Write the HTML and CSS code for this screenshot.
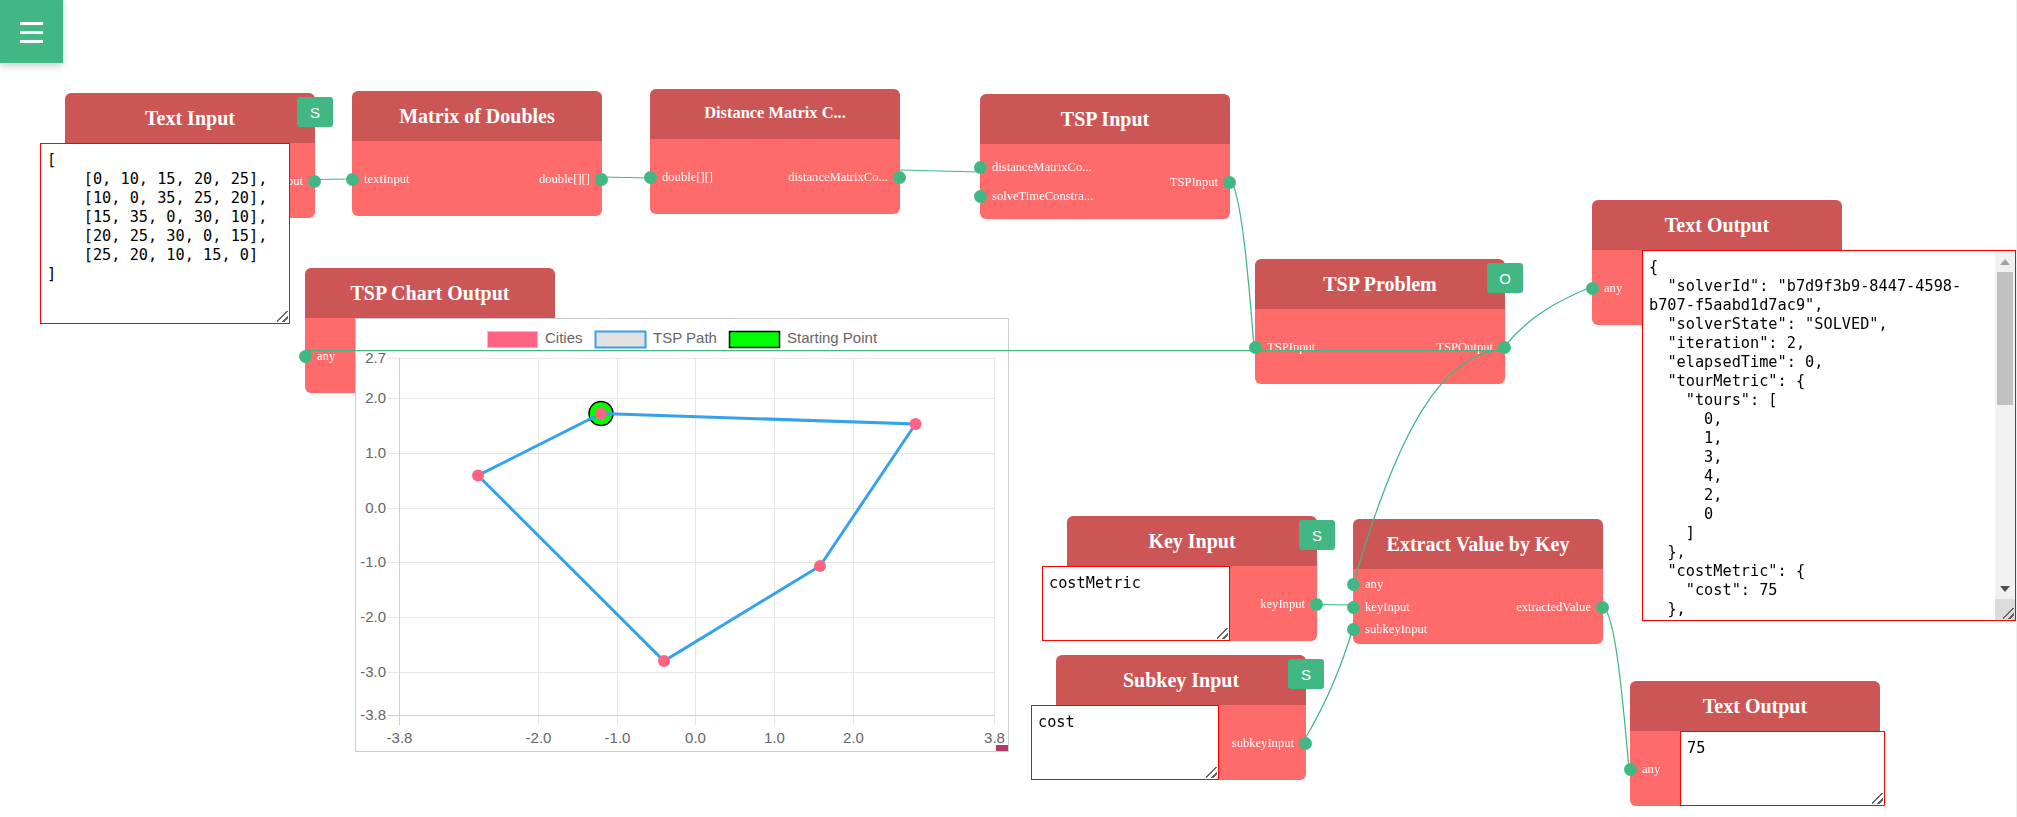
FILE: index.html
```html
<!DOCTYPE html>
<html lang="en">
<head>
  <meta charset="UTF-8">
  <meta name="viewport" content="width=device-width, initial-scale=1.0">
  <title>TSP Flow</title>
  <link rel="stylesheet" href="styles.css">
</head>
<body>
  <div class="sidebar-edge"></div>
  <button class="menu-button" type="button">
    <span></span><span></span><span></span>
  </button>

  <div class="canvas">
    <div class="node node-text-input">
      <div class="node-title">Text Input</div>
      <div class="badge">S</div>
      <div class="node-body">
        <textarea class="node-text input-text tall" spellcheck="false">[
    [0, 10, 15, 20, 25],
    [10, 0, 35, 25, 20],
    [15, 35, 0, 30, 10],
    [20, 25, 30, 0, 15],
    [25, 20, 10, 15, 0]
]</textarea>
        <div class="sockets outputs narrow">
          <div class="socket"><i class="dot"></i>textInput</div>
        </div>
      </div>
    </div>

    <div class="node node-matrix">
      <div class="node-title">Matrix of Doubles</div>
      <div class="node-body">
        <div class="sockets inputs">
          <div class="socket"><i class="dot"></i>textInput</div>
        </div>
        <div class="sockets outputs">
          <div class="socket"><i class="dot"></i>double[][]</div>
        </div>
      </div>
    </div>

    <div class="node node-distance">
      <div class="node-title small">Distance Matrix C...</div>
      <div class="node-body">
        <div class="sockets inputs">
          <div class="socket"><i class="dot"></i>double[][]</div>
        </div>
        <div class="sockets outputs">
          <div class="socket"><i class="dot"></i>distanceMatrixCo...</div>
        </div>
      </div>
    </div>

    <div class="node node-tsp-input">
      <div class="node-title">TSP Input</div>
      <div class="node-body">
        <div class="sockets inputs">
          <div class="socket"><i class="dot"></i>distanceMatrixCo...</div>
          <div class="socket"><i class="dot"></i>solveTimeConstra...</div>
        </div>
        <div class="sockets outputs">
          <div class="socket"><i class="dot"></i>TSPInput</div>
        </div>
      </div>
    </div>

    <div class="node node-tsp-problem">
      <div class="node-title">TSP Problem</div>
      <div class="badge">O</div>
      <div class="node-body">
        <div class="sockets inputs">
          <div class="socket"><i class="dot"></i>TSPInput</div>
        </div>
        <div class="sockets outputs">
          <div class="socket"><i class="dot"></i>TSPOutput</div>
        </div>
      </div>
    </div>

    <div class="node node-chart">
      <div class="node-title">TSP Chart Output</div>
      <div class="node-body">
        <div class="sockets inputs any-col">
          <div class="socket"><i class="dot"></i>any</div>
        </div>
        <div class="chart-box">
          <svg class="chart" viewBox="356 319 652 432" width="652" height="432">
            <g class="grid">
              <path d="M388 358.5H994.5M388 398.5H994.5M388 453.5H994.5M388 508.5H994.5M388 562.5H994.5M388 617.5H994.5M388 672.5H994.5"/>
              <path d="M538.5 358V725M617.5 358V725M695.5 358V725M774.5 358V725M853.5 358V725M994.5 358V725"/>
            </g>
            <g class="axis">
              <path d="M399.5 358V725M388 715.5H994.5"/>
            </g>
            <g class="ticks-y">
              <text x="386" y="363">2.7</text>
              <text x="386" y="403">2.0</text>
              <text x="386" y="458">1.0</text>
              <text x="386" y="513">0.0</text>
              <text x="386" y="567">-1.0</text>
              <text x="386" y="622">-2.0</text>
              <text x="386" y="677">-3.0</text>
              <text x="386" y="720">-3.8</text>
            </g>
            <g class="ticks-x">
              <text x="399.5" y="743">-3.8</text>
              <text x="538.5" y="743">-2.0</text>
              <text x="617.5" y="743">-1.0</text>
              <text x="695.5" y="743">0.0</text>
              <text x="774.5" y="743">1.0</text>
              <text x="853.5" y="743">2.0</text>
              <text x="994.5" y="743">3.8</text>
            </g>
            <g class="legend">
              <rect class="key-cities" x="487.5" y="331.5" width="50" height="16"/>
              <text x="545" y="343">Cities</text>
              <rect class="key-path" x="595.5" y="331.5" width="50" height="16"/>
              <text x="653" y="343">TSP Path</text>
              <rect class="key-start" x="729.5" y="331.5" width="50" height="16"/>
              <text x="787" y="343">Starting Point</text>
            </g>
            <circle class="start-point" cx="601" cy="413.5" r="12"/>
            <path class="tour" d="M601 413.5L915.5 424L820 566L664 661L478 475.5Z"/>
            <g class="cities">
              <circle cx="601" cy="413.5" r="6"/>
              <circle cx="915.5" cy="424" r="6"/>
              <circle cx="820" cy="566" r="6"/>
              <circle cx="664" cy="661" r="6"/>
              <circle cx="478" cy="475.5" r="6"/>
            </g>
            <rect class="corner-mark" x="996" y="745" width="12" height="6"/>
          </svg>
        </div>
      </div>
    </div>

    <div class="node node-key">
      <div class="node-title">Key Input</div>
      <div class="badge">S</div>
      <div class="node-body">
        <textarea class="node-text input-text" spellcheck="false">costMetric</textarea>
        <div class="sockets outputs">
          <div class="socket"><i class="dot"></i>keyInput</div>
        </div>
      </div>
    </div>

    <div class="node node-subkey">
      <div class="node-title">Subkey Input</div>
      <div class="badge">S</div>
      <div class="node-body">
        <textarea class="node-text input-text" spellcheck="false">cost</textarea>
        <div class="sockets outputs">
          <div class="socket"><i class="dot"></i>subkeyInput</div>
        </div>
      </div>
    </div>

    <div class="node node-extract">
      <div class="node-title">Extract Value by Key</div>
      <div class="node-body">
        <div class="sockets inputs">
          <div class="socket"><i class="dot"></i>any</div>
          <div class="socket"><i class="dot"></i>keyInput</div>
          <div class="socket"><i class="dot"></i>subkeyInput</div>
        </div>
        <div class="sockets outputs">
          <div class="socket"><i class="dot"></i>extractedValue</div>
        </div>
      </div>
    </div>

    <div class="node node-output-json">
      <div class="node-title">Text Output</div>
      <div class="node-body">
        <div class="sockets inputs any-col">
          <div class="socket"><i class="dot"></i>any</div>
        </div>
        <textarea class="node-text json-text" spellcheck="false" readonly>{
  "solverId": "b7d9f3b9-8447-4598-b707-f5aabd1d7ac9",
  "solverState": "SOLVED",
  "iteration": 2,
  "elapsedTime": 0,
  "tourMetric": {
    "tours": [
      0,
      1,
      3,
      4,
      2,
      0
    ]
  },
  "costMetric": {
    "cost": 75
  },
  "distanceMatrix": [
    [0, 10, 15, 20, 25],
    [10, 0, 35, 25, 20],
    [15, 35, 0, 30, 10],
    [20, 25, 30, 0, 15],
    [25, 20, 10, 15, 0]
  ]
}</textarea>
        <!-- headless chrome hides native scrollbars, so this one is drawn -->
        <div class="scrollbar">
          <div class="scroll-btn"><i class="arrow-up"></i></div>
          <div class="scroll-thumb"></div>
          <div class="scroll-track"></div>
          <div class="scroll-btn"><i class="arrow-down"></i></div>
          <div class="scroll-corner"></div>
        </div>
      </div>
    </div>

    <div class="node node-output-value">
      <div class="node-title">Text Output</div>
      <div class="node-body">
        <div class="sockets inputs any-col">
          <div class="socket"><i class="dot"></i>any</div>
        </div>
        <textarea class="node-text value-text" spellcheck="false" readonly>75</textarea>
      </div>
    </div>

    <!-- connections sit above the nodes -->
    <svg class="wires" viewBox="0 0 2017 817" width="2017" height="817">
      <path d="M315 179.5L352 179"/>
      <path d="M602 177L650 178"/>
      <path d="M900 170L980 172"/>
      <path d="M1231 180C1243 200 1250 300 1254 346"/>
      <path d="M305 350.5L1505 350.5"/>
      <path d="M1505 346C1530 315 1560 300 1591 287"/>
      <path d="M1505 350C1440 350 1395 440 1353 585"/>
      <path d="M1317 604.5L1353 605"/>
      <path d="M1306 737C1325 705 1342 665 1353 628"/>
      <path d="M1603 606C1615 615 1622 690 1629 769"/>
    </svg>
  </div>
</body>
</html>
```

FILE: styles.css
```css
body { margin: 0; background: white; font-family: "Liberation Serif", serif; overflow: hidden; }

.sidebar-edge { position: fixed; left: 0; top: 0; width: 0; height: 100%; box-shadow: 0 0 8px rgba(0, 0, 0, 0.25); }
.menu-button { position: fixed; left: 0; top: 0; z-index: 5; width: 63px; height: 63px; padding: 2px 0 0; border: none; background: #41b883; box-shadow: 0 3px 8px rgba(0, 0, 0, 0.2); display: flex; flex-direction: column; align-items: center; justify-content: center; gap: 6px; }
.menu-button span { display: block; width: 23px; height: 3px; background: white; }

.canvas { position: relative; width: 2017px; height: 817px; overflow: hidden; box-shadow: inset -1px 0 #eee; }

.node { position: absolute; width: 250px; height: 125px; border-radius: 6px; }
.node-title { height: 50px; display: flex; align-items: center; justify-content: center; background: #cc5656; color: white; font-size: 20px; font-weight: bold; border-radius: 6px 6px 0 0; }
.node-title.small { box-sizing: border-box; padding-bottom: 2px; font-size: 16.4px; }
.node-body { position: relative; height: 75px; display: flex; justify-content: space-between; background: #ff6b6b; border-radius: 0 0 6px 6px; }

.node-text-input { left: 65px; top: 93px; }
.node-matrix { left: 352px; top: 91px; }
.node-distance { left: 650px; top: 89px; }
.node-tsp-input { left: 980px; top: 94px; }
.node-tsp-problem { left: 1255px; top: 259px; }
.node-chart { left: 305px; top: 268px; }
.node-key { left: 1067px; top: 516px; }
.node-subkey { left: 1056px; top: 655px; }
.node-extract { left: 1353px; top: 519px; }
.node-output-json { left: 1592px; top: 200px; }
.node-output-value { left: 1630px; top: 681px; }

.badge { position: absolute; top: 4px; right: -18px; width: 36px; height: 30px; display: flex; align-items: center; justify-content: center; background: #41b883; color: white; font-family: "Liberation Sans", sans-serif; font-size: 15px; border-radius: 3px; }

.sockets { height: 75px; display: flex; flex-direction: column; justify-content: space-evenly; color: white; font-size: 12.6px; white-space: nowrap; }
.socket { position: relative; height: 14px; line-height: 14px; }
.dot { position: absolute; top: 1px; width: 13px; height: 13px; border-radius: 50%; background: #41b883; }
.inputs .socket { padding-left: 12px; }
.inputs .dot { left: -6px; }
.outputs { align-items: flex-end; }
.outputs .socket { padding-right: 12px; }
.outputs .dot { right: -6px; }
.outputs.narrow { width: 25px; }
.any-col { width: 50px; flex: none; }

textarea { display: block; box-sizing: border-box; flex: none; margin: 0; position: relative; z-index: 1; resize: none; }
.node-text { padding: 7px 6px; border: 1px solid red; border-radius: 0; outline: none; color: black; font-family: "DejaVu Sans Mono", monospace; font-size: 15.25px; line-height: 19px; background: white linear-gradient(135deg, transparent 42%, #666 42% 54%, transparent 54% 70%, #666 70% 82%, transparent 82%) no-repeat right 1px bottom 1px / 11px 11px; }
.input-text { margin-left: -25px; width: 188px; height: 75px; }
.input-text.tall { width: 250px; height: 181px; }
.json-text { width: 374px; height: 371px; padding-right: 24px; overflow: hidden; background: white; }
.value-text { width: 205px; height: 75px; }

.scrollbar { position: absolute; z-index: 2; left: 403px; top: 1px; width: 20px; height: 369px; display: flex; flex-direction: column; background: #f1f1f1; }
.scroll-btn { height: 21px; flex: none; display: flex; align-items: center; justify-content: center; }
.arrow-up { border: 5px solid transparent; border-top: none; border-bottom: 6px solid #a3a3a3; }
.arrow-down { border: 5px solid transparent; border-bottom: none; border-top: 6px solid #505050; }
.scroll-thumb { flex: none; height: 133px; margin: 0 2px; background: #c1c1c1; }
.scroll-track { flex: 1; }
.scroll-corner { height: 21px; flex: none; background: #dcdcdc linear-gradient(135deg, transparent 42%, #666 42% 54%, transparent 54% 70%, #666 70% 82%, transparent 82%) no-repeat right 1px bottom 1px / 11px 11px; }

.chart-box { flex: none; box-sizing: border-box; width: 654px; height: 434px; border: 1px solid #ccc; background: white; position: relative; z-index: 1; }
.chart { display: block; }
.grid path { fill: none; stroke: #e6e6e6; stroke-width: 1; }
.axis path { fill: none; stroke: #cfcfcf; stroke-width: 1; }
.chart text { font-family: "Liberation Sans", sans-serif; font-size: 15px; fill: #666; }
.ticks-y text { text-anchor: end; }
.ticks-x text { text-anchor: middle; }
.key-cities { fill: #ff6384; stroke: #ffb3c2; stroke-width: 1; }
.key-path { fill: #e1e1e1; stroke: #36a2eb; stroke-width: 2; }
.key-start { fill: #00ff00; stroke: black; stroke-width: 1.5; }
.start-point { fill: #00ff00; stroke: black; stroke-width: 1.5; }
.tour { fill: none; stroke: #36a2eb; stroke-width: 3; }
.cities circle { fill: #ff6384; }
.corner-mark { fill: #b03a6e; }

.wires { position: absolute; left: 0; top: 0; z-index: 2; pointer-events: none; }
.wires path { fill: none; stroke: #41b883; stroke-width: 1.25; }
```
